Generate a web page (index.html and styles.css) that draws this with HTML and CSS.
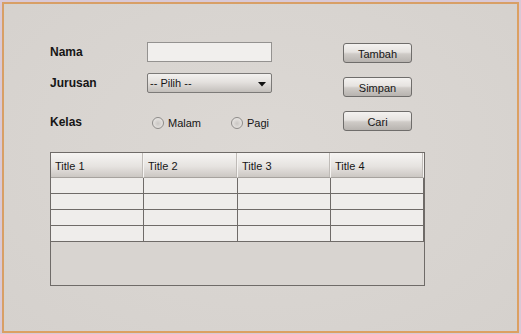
FILE: index.html
```html
<!DOCTYPE html>
<html>
<head>
<meta charset="utf-8">
<link rel="stylesheet" href="styles.css">
</head>
<body>
<div class="frame">
  <div class="top">
    <div class="form">
      <div class="label">Nama</div>
      <div class="field"></div>
      <div class="label">Jurusan</div>
      <div class="select"><span>-- Pilih --</span>
        <svg class="arrow" width="8" height="5" viewBox="0 0 8 5"><path d="M0 0H8L4 4.5Z" fill="#111"/></svg>
      </div>
      <div class="label kelas">Kelas</div>
      <div class="radios">
        <span class="radio"><span class="dot"></span>Malam</span>
        <span class="radio"><span class="dot"></span>Pagi</span>
      </div>
    </div>
    <div class="buttons">
      <div class="btn">Tambah</div>
      <div class="btn">Simpan</div>
      <div class="btn">Cari</div>
    </div>
  </div>
  <div class="table">
    <div class="thead">
      <div class="th">Title 1</div>
      <div class="th">Title 2</div>
      <div class="th">Title 3</div>
      <div class="th">Title 4</div>
    </div>
    <div class="tr"><div class="td"></div><div class="td"></div><div class="td"></div><div class="td"></div></div>
    <div class="tr"><div class="td"></div><div class="td"></div><div class="td"></div><div class="td"></div></div>
    <div class="tr"><div class="td"></div><div class="td"></div><div class="td"></div><div class="td"></div></div>
    <div class="tr"><div class="td"></div><div class="td"></div><div class="td"></div><div class="td"></div></div>
  </div>
</div>
</body>
</html>
```
FILE: styles.css
```css
html, body {
  margin: 0;
  padding: 0;
  background: #d9c9d6;
}
body {
  width: 521px;
  height: 334px;
  overflow: hidden;
  padding-top: 2px;
  box-sizing: border-box;
  font-family: "Liberation Sans", Arial, sans-serif;
  color: #161616;
}
.frame {
  box-sizing: border-box;
  margin: 0 2px 0 2px;
  width: 517px;
  height: 331px;
  border: 2px solid #dca062;
  border-top-color: #d89f66;
  border-left-color: #d89f66;
  background: radial-gradient(ellipse at 50% 45%, #dcd8d4 0%, #d8d4d0 60%, #d5d1cd 100%);
  padding: 38px 0 0 46px;
}
.top {
  display: flex;
}
.form {
  display: grid;
  grid-template-columns: 97px 125px;
  grid-template-rows: 20px 20px 20px;
  row-gap: 11px;
  align-items: center;
}
.form .kelas {
  margin-top: 16px;
}
.form .radios {
  margin-top: 18px;
}
.label {
  font-weight: bold;
  font-size: 12px;
  line-height: 14px;
}
.field {
  box-sizing: border-box;
  height: 20px;
  border: 1px solid #949290;
  background: #f1efed;
}
.select {
  box-sizing: border-box;
  height: 20px;
  border: 1px solid #7c7a78;
  border-radius: 2px;
  background: linear-gradient(#f3f1ef 0%, #e4e1de 45%, #c3bfbb 100%);
  display: flex;
  align-items: center;
  justify-content: space-between;
  padding: 0 5px 0 2px;
  font-size: 11px;
}
.arrow {
  margin-top: 2px;
}
.radios {
  display: flex;
  align-items: center;
  font-size: 11px;
  padding-left: 5px;
}
.radio {
  display: flex;
  align-items: center;
  gap: 4px;
  width: 79px;
  flex-shrink: 0;
}
.dot {
  box-sizing: border-box;
  width: 12px;
  height: 12px;
  border-radius: 50%;
  border: 1px solid #8d8b89;
  background: radial-gradient(circle at 50% 55%, #c9c6c3 0%, #dedbd8 50%, #f1efed 100%);
}
.buttons {
  margin-left: 71px;
  margin-top: 1px;
  display: flex;
  flex-direction: column;
  gap: 14px;
}
.btn {
  box-sizing: border-box;
  width: 69px;
  height: 20px;
  border: 1px solid #6f6d6b;
  border-radius: 3px;
  background: linear-gradient(#f4f2f0 0%, #e6e3e0 45%, #cfcbc7 55%, #b7b3af 100%);
  font-size: 11px;
  display: flex;
  align-items: center;
  justify-content: center;
  padding-top: 1px;
}
.table {
  box-sizing: border-box;
  margin-top: 21px;
  width: 375px;
  height: 134px;
  border: 1px solid #6f6b68;
  background: #d8d4d0;
}
.thead, .tr {
  display: grid;
  grid-template-columns: 93px 94px 93px 93px;
}
.th {
  box-sizing: border-box;
  height: 25px;
  border-bottom: 1px solid #a6a29e;
  border-right: 1px solid #f6f4f2;
  box-shadow: inset -1px 0 0 #bfbbb7;
  background: linear-gradient(#f6f4f2 0%, #efedeb 25%, #e6e3e0 55%, #cbc7c3 100%);
  font-size: 11px;
  display: flex;
  align-items: center;
  padding: 1px 0 0 4px;
}
.td {
  box-sizing: border-box;
  height: 16px;
  border-bottom: 1px solid #6f6b68;
  border-right: 1px solid #6f6b68;
  background: #efedeb;
}
```
